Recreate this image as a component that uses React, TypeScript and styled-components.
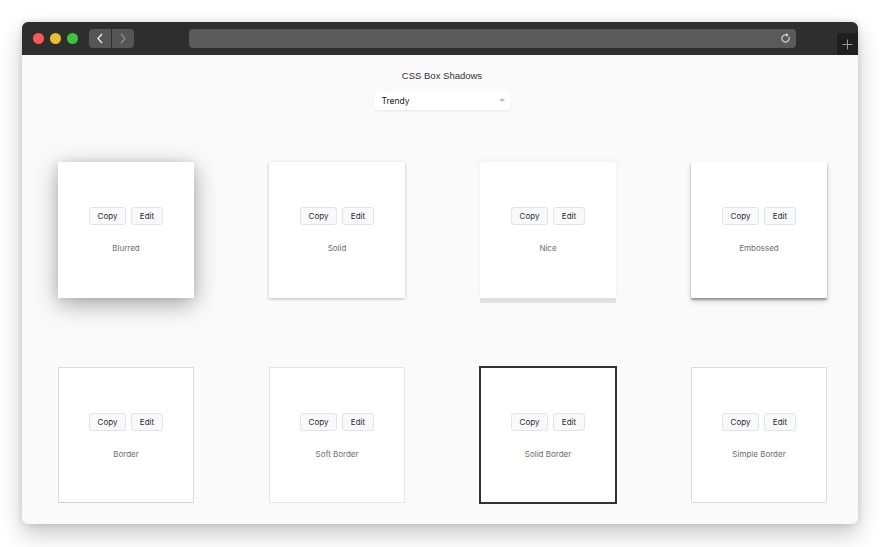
import React from "react";
import styled, { createGlobalStyle } from "styled-components";

const GlobalStyle = createGlobalStyle`
  html, body {
    margin: 0;
    padding: 0;
    background: #ffffff;
  }
  body {
    font-family: "Inter", "Liberation Sans", Arial, sans-serif;
  }
`;

const Stage = styled.div`
  width: 880px;
  height: 547px;
  padding: 22px 0 0 22px;
  box-sizing: border-box;
`;

const Window = styled.div`
  width: 836px;
  height: 502px;
  border-radius: 6px;
  overflow: hidden;
  display: flex;
  flex-direction: column;
  background: #fafafa;
  box-shadow: 0 10px 22px rgba(0, 0, 0, 0.22), 0 0 6px rgba(0, 0, 0, 0.12);
`;

const TitleBar = styled.div`
  height: 33px;
  flex: 0 0 33px;
  background: #2e2e2e;
  display: flex;
  align-items: center;
  padding-left: 11px;
`;

const Lights = styled.div`
  display: flex;
  gap: 6px;
`;

const Light = styled.span<{ $color: string }>`
  width: 11px;
  height: 11px;
  border-radius: 50%;
  background: ${(p) => p.$color};
`;

const NavGroup = styled.div`
  display: flex;
  gap: 1px;
  margin-left: 11px;
`;

const NavButton = styled.div<{ $dim?: boolean }>`
  width: 22px;
  height: 19px;
  background: #555555;
  border-radius: ${(p) => (p.$dim ? "0 4px 4px 0" : "4px 0 0 4px")};
  display: flex;
  align-items: center;
  justify-content: center;
  color: ${(p) => (p.$dim ? "#8a8a8a" : "#e6e6e6")};
`;

const UrlBar = styled.div`
  width: 607px;
  height: 19px;
  margin-left: 55px;
  background: #5a5a5a;
  border-radius: 4px;
  display: flex;
  align-items: center;
  justify-content: flex-end;
  padding-right: 5px;
  box-sizing: border-box;
  color: #e0e0e0;
`;

const PlusTab = styled.div`
  margin-left: auto;
  align-self: flex-end;
  width: 21px;
  height: 22px;
  background: #1f1f1f;
  display: flex;
  align-items: center;
  justify-content: center;
  color: #9a9a9a;
`;

const Content = styled.div`
  flex: 1;
  display: flex;
  flex-direction: column;
  align-items: center;
  padding-left: 4px;
`;

const Heading = styled.div`
  margin-top: 14px;
  font-family: "Liberation Sans", Arial, sans-serif;
  font-size: 9.5px;
  color: #333333;
  line-height: 13px;
`;

const Select = styled.div`
  margin-top: 9px;
  width: 137px;
  height: 19px;
  background: #ffffff;
  border-radius: 3px;
  box-shadow: 0 1px 2px rgba(0, 0, 0, 0.08);
  display: flex;
  align-items: center;
  justify-content: space-between;
  padding: 0 6px 0 8px;
  box-sizing: border-box;
  font-size: 8.5px;
  color: #222222;
`;

const Caret = styled.span`
  width: 0;
  height: 0;
  border-left: 3px solid transparent;
  border-right: 3px solid transparent;
  border-top: 3px solid #b5b5b5;
`;

const Grid = styled.div`
  align-self: stretch;
  margin-top: 52px;
  padding-left: 32px;
  display: grid;
  grid-template-columns: repeat(4, 136px);
  column-gap: 75px;
  row-gap: 69px;
`;

const shadows: Record<string, string> = {
  blurred: "box-shadow: 0 6px 22px rgba(0,0,0,0.34), 0 0 8px rgba(0,0,0,0.08);",
  solid: "box-shadow: 0 1px 3px rgba(0,0,0,0.26);",
  nice: "box-shadow: 0 5px 0 rgba(0,0,0,0.09), 0 0 5px rgba(0,0,0,0.06);",
  embossed: "box-shadow: 0 2px 2px rgba(0,0,0,0.35), 0 4px 6px rgba(0,0,0,0.12);",
  border: "border: 1px solid #dcdcdc; border-bottom-color: #cfcfcf;",
  soft: "border: 1px solid #e6e6e6;",
  solidBorder: "border: 2px solid #333333; width: 138px; height: 138px; margin: -1px; padding-top: 45px;",
  simple: "border: 1px solid #dddddd;",
};

const Card = styled.div<{ $variant: string }>`
  width: 136px;
  height: 136px;
  box-sizing: border-box;
  background: #ffffff;
  display: flex;
  flex-direction: column;
  align-items: center;
  padding-top: 45px;
  ${(p) => shadows[p.$variant]}
`;

const ButtonRow = styled.div`
  display: flex;
  gap: 5px;
`;

const Button = styled.button<{ $w: number }>`
  width: ${(p) => p.$w}px;
  height: 18px;
  padding: 0;
  background: #f8f9fb;
  border: 1px solid #e3e3e3;
  border-radius: 3px;
  font-family: "Inter", "Liberation Sans", sans-serif;
  font-size: 8px;
  color: #2a2a2a;
`;

const Label = styled.div`
  margin-top: 18px;
  font-size: 8px;
  color: #6e6e6e;
`;

const cards = [
  { name: "Blurred", variant: "blurred" },
  { name: "Solid", variant: "solid" },
  { name: "Nice", variant: "nice" },
  { name: "Embossed", variant: "embossed" },
  { name: "Border", variant: "border" },
  { name: "Soft Border", variant: "soft" },
  { name: "Solid Border", variant: "solidBorder" },
  { name: "Simple Border", variant: "simple" },
];

export default function App() {
  return (
    <>
      <GlobalStyle />
      <Stage>
        <Window>
          <TitleBar>
            <Lights>
              <Light $color="#fd5752" />
              <Light $color="#e8c02d" />
              <Light $color="#3dc33c" />
            </Lights>
            <NavGroup>
              <NavButton>
                <svg width="8" height="11" viewBox="0 0 8 11">
                  <path d="M6 1 L2 5.5 L6 10" fill="none" stroke="currentColor" strokeWidth="1.4" />
                </svg>
              </NavButton>
              <NavButton $dim>
                <svg width="8" height="11" viewBox="0 0 8 11">
                  <path d="M2 1 L6 5.5 L2 10" fill="none" stroke="currentColor" strokeWidth="1.4" />
                </svg>
              </NavButton>
            </NavGroup>
            <UrlBar>
              <svg width="11" height="11" viewBox="0 0 12 12">
                <path d="M9.6 4.2 A4 4 0 1 1 7.4 2.2" fill="none" stroke="currentColor" strokeWidth="1.2" />
                <path d="M6.6 0.4 L9.4 2.3 L6.8 4.2 Z" fill="currentColor" />
              </svg>
            </UrlBar>
            <PlusTab>
              <svg width="11" height="11" viewBox="0 0 11 11">
                <path d="M5.5 0.5 V10.5 M0.5 5.5 H10.5" stroke="currentColor" strokeWidth="1" />
              </svg>
            </PlusTab>
          </TitleBar>
          <Content>
            <Heading>CSS Box Shadows</Heading>
            <Select>
              <span>Trendy</span>
              <Caret />
            </Select>
            <Grid>
              {cards.map((c) => (
                <Card key={c.name} $variant={c.variant}>
                  <ButtonRow>
                    <Button $w={37}>Copy</Button>
                    <Button $w={32}>Edit</Button>
                  </ButtonRow>
                  <Label>{c.name}</Label>
                </Card>
              ))}
            </Grid>
          </Content>
        </Window>
      </Stage>
    </>
  );
}
